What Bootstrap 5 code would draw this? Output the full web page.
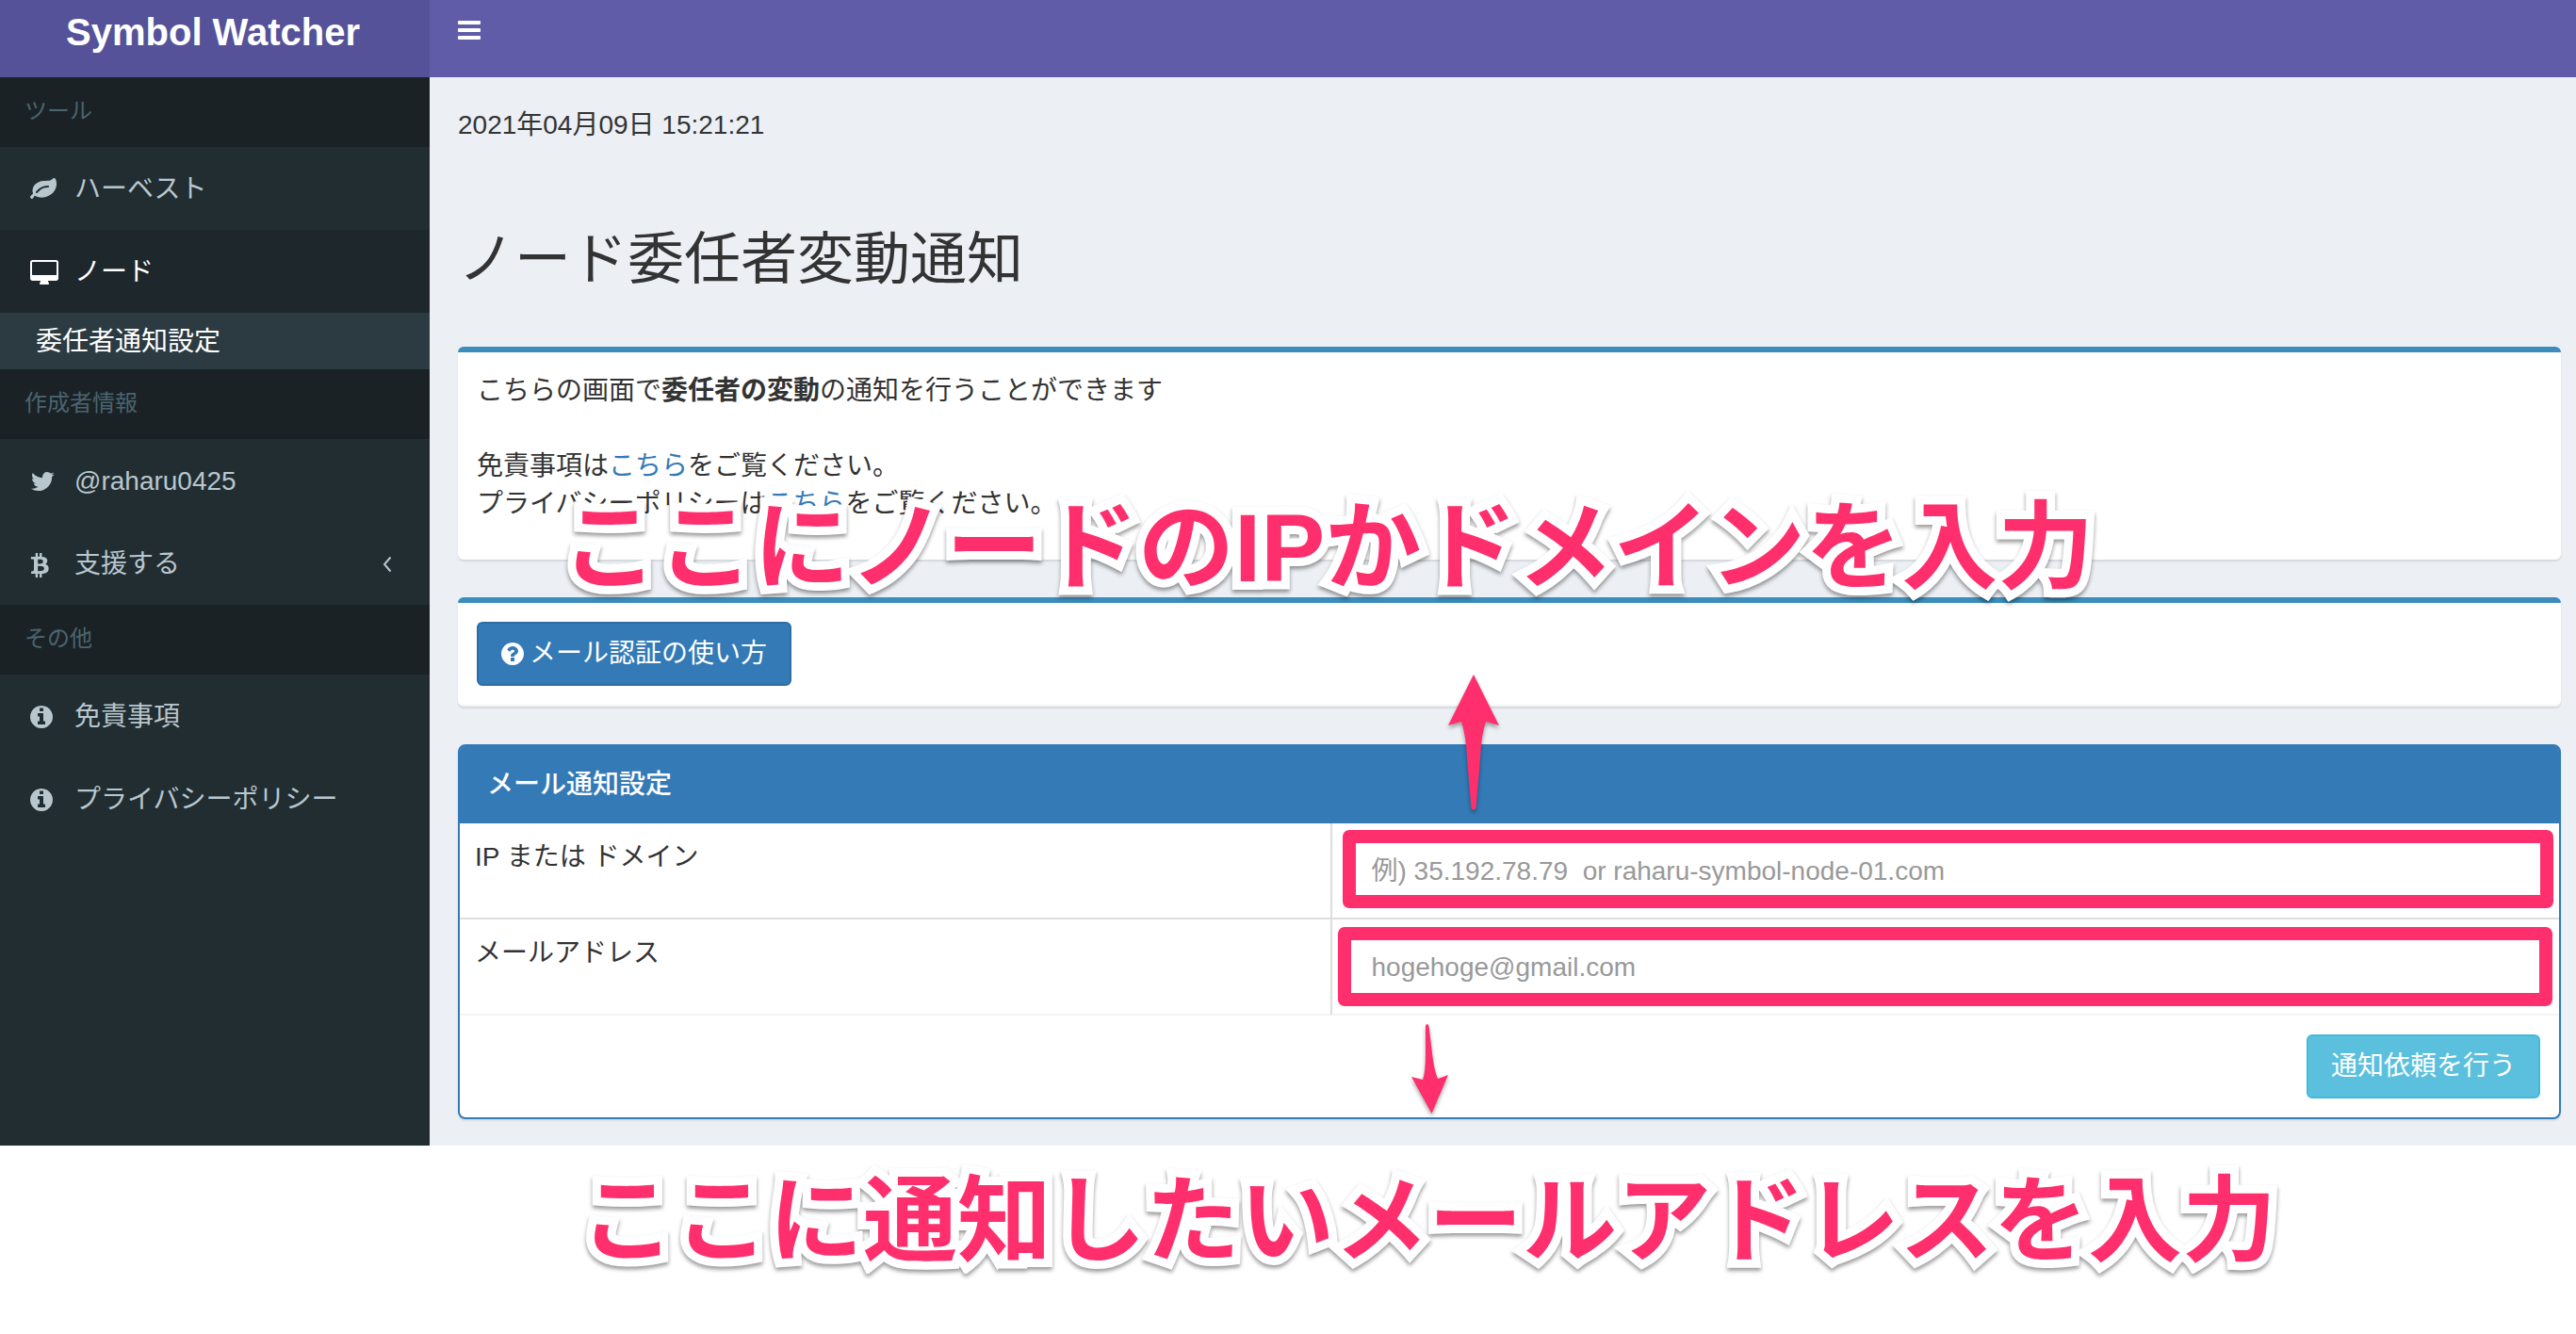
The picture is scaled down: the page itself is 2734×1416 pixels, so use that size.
<!DOCTYPE html>
<html lang="ja">
<head>
<meta charset="utf-8">
<meta name="viewport" content="width=device-width, initial-scale=1">
<title>Symbol Watcher</title>
<link rel="stylesheet" href="https://cdn.jsdelivr.net/npm/bootstrap@5.3.0/dist/css/bootstrap.min.css">
<style>
  body { font: 400 28px/40px "Liberation Sans", "Noto Sans CJK JP", sans-serif; color: #333; background: #fff; }
  a { text-decoration: none; }
  svg { fill: currentColor; display: block; }
  .side { width: 456px; flex: none; background: #222d32; }
  .brand { height: 82px; padding: 0 4px 14px 0; background: #555299; color: #fff; font-size: 40px; line-height: 68px; font-weight: 700; text-align: center; }
  .brand:hover { color: #fff; }
  .topbar { height: 82px; padding: 0 30px 18px; background: #605ca8; }
  .toggle { border: 0; background: none; padding: 0; color: #fff; }
  .side-head { height: 74px; padding: 16px 26px 18px; background: #1a2226; color: #4b646f; font-size: 24px; }
  .side-link { height: 88px; padding: 2px 40px 0 32px; color: #b8c7ce; }
  .side-link .ico { width: 47px; }
  .side-link.active { background: #1e282c; color: #fff; }
  .side-sub { height: 60px; padding: 2px 38px 0; background: #2c3b41; color: #fff; }
  .page-main { background: #ecf0f5; min-width: 0; }
  .content { padding: 31px 16px 28px 30px; }
  .content h1 { font-size: 60px; line-height: 66px; font-weight: 400; margin: 90px 0 59px; }
  .box { background: #fff; border-top: 6px solid #3c8dbc; border-radius: 6px; box-shadow: 0 2px 2px rgba(0,0,0,.1); padding: 20px; margin-bottom: 40px; }
  .box p { padding-top: 1px; margin-bottom: 19px; }
  .box-foot { border-bottom: 2px solid #f4f4f4; }
  .box a:not(.btn) { color: #337ab7; }
  .btn-lte { font-size: 28px; line-height: 40px; padding: 12px 24px; border-width: 2px; border-radius: 6px; color: #fff; height: 68px; }
  .btn-help { gap: 6px; background: #337ab7; border-color: #2e6da4; }
  .btn-send { background: #5bc0de; border-color: #46b8da; }
  .panel { border: 2px solid #337ab7; border-radius: 8px; background: #fff; box-shadow: 0 2px 2px rgba(0,0,0,.08); }
  .panel-title { background: #337ab7; color: #fff; padding: 21px 29px; font-size: 28px; line-height: 40px; margin: 0; border-radius: 5px 5px 0 0; }
  .settings { width: 100%; border-collapse: separate; border-spacing: 0; table-layout: fixed; }
  .settings th { width: 41.45%; font-weight: 400; vertical-align: top; }
  .settings th, .settings td { padding: 16px; border-bottom: 2px solid #ddd; }
  .settings td { border-left: 2px solid #ddd; }
  .settings tr:last-child > * { border-bottom-color: #f4f4f4; }
  .settings .form-control { height: 68px; padding: 13px 24px 11px; border: 2px solid #ccc; border-radius: 0; font-size: 28px; line-height: 40px; }
  .settings .form-control::placeholder { color: #999; }
  .field { position: relative; }
  .frame { position: absolute; border: 14px solid #ff2f6d; border-radius: 7px; pointer-events: none; }
  .frame-ip { inset: -9px -10px -6px -5px; }
  .frame-mail { inset: -8px -9px -8px -10px; }
  .panel-foot { padding: 20px; }
  .note { color: #ff2f6d; font-weight: 700; white-space: nowrap; line-height: 120px; -webkit-text-stroke: 18px #fff; paint-order: stroke fill; filter: drop-shadow(0 3px 2px rgba(0,0,0,.4)); margin: 0; }
  .note-ip { position: absolute; left: 596px; top: 522px; font-size: 102px; }
  .note-mail { padding: 20px 0 60px 616px; font-size: 100px; }
  .arrow { position: absolute; fill: #ff2f6d; filter: drop-shadow(0 3px 2px rgba(0,0,0,.35)); }
  .arrow-up { left: 1536px; top: 715px; }
  .arrow-down { left: 1497px; top: 1086px; }
</style>
<script src="https://cdn.jsdelivr.net/npm/bootstrap@5.3.0/dist/js/bootstrap.bundle.min.js"></script>
</head>
<body class="position-relative">
<div class="d-flex align-items-stretch">
  <aside class="side d-flex flex-column">
    <a href="#" class="brand d-block">Symbol Watcher</a>
    <nav>
      <div class="side-head">ツール</div>
      <a href="#" class="side-link d-flex align-items-center">
        <span class="ico"><svg width="28" height="28" viewBox="0 0 1792 1792"><path d="M1280 704q0-26-19-45t-45-19q-172 0-318 49.500t-259.500 134-235.500 219.500q-19 21-19 45 0 26 19 45t45 19q24 0 45-19 27-24 74-71t67-66q137-124 268.500-176t313.500-52q26 0 45-19t19-45zm512-198q0 95-20 193-46 224-184.500 383t-357.500 268q-214 108-438 108-148 0-286-47-15-5-88-42t-96-37q-16 0-39.500 32t-45 70-52.500 70-60 32q-43 0-63.500-17.500t-45.500-59.500q-2-4-6-11t-5.500-10-3-9.500-1.500-13.500q0-35 31-73.500t68-65.500 68-56 31-48q0-4-14-38t-16-44q-9-51-9-104 0-115 43.500-220t119-184.500 170.500-139 204-95.500q55-18 145-25.500t179.500-9 178.500-6 163.500-24 113.500-56.500l29.500-29.500 29.500-28 27-20 36.500-16 43.500-4.500q39 0 70.500 46t47.500 112 24 124 8 96z"/></svg></span>ハーベスト</a>
      <a href="#" class="side-link active d-flex align-items-center">
        <span class="ico"><svg width="30" height="26" viewBox="-64 0 1920 1664"><path d="M1728 992v-832q0-13-9.500-22.500t-22.500-9.500h-1600q-13 0-22.500 9.500t-9.500 22.500v832q0 13 9.500 22.500t22.500 9.500h1600q13 0 22.500-9.500t9.500-22.500zm128-832v1088q0 66-47 113t-113 47h-544q0 37 16 77.500t32 71 16 43.500q0 26-19 45t-45 19h-512q-26 0-45-19t-19-45q0-14 16-44t32-70 16-78h-544q-66 0-113-47t-47-113v-1088q0-66 47-113t113-47h1600q66 0 113 47t47 113z"/></svg></span>ノード</a>
      <a href="#" class="side-sub d-flex align-items-center">委任者通知設定</a>
      <div class="side-head">作成者情報</div>
      <a href="#" class="side-link d-flex align-items-center">
        <span class="ico"><svg width="26" height="28" viewBox="44 0 1664 1792"><path d="M1684 408q-67 98-162 167 1 14 1 42 0 130-38 259.500t-115.500 248.500-184.500 210.500-258 146-323 54.500q-271 0-496-145 35 4 78 4 225 0 401-138-105-2-188-64.500t-114-159.500q33 5 61 5 43 0 85-11-112-23-185.500-111.500t-73.500-205.500v-4q68 38 146 41-66-44-105-115t-39-154q0-88 44-163 121 149 294.500 238.500t371.500 99.500q-8-38-8-74 0-134 94.500-228.500t228.500-94.500q140 0 236 102 109-21 205-78-37 115-142 178 93-10 186-50z"/></svg></span>@raharu0425</a>
      <a href="#" class="side-link d-flex align-items-center">
        <span class="ico"><svg width="20" height="28" viewBox="0 0 1280 1792"><path d="M1167 640q18 182-131 258 117 28 175 103t45 214q-7 71-32.500 125t-64.500 89-97 58.500-121.500 34.500-145.500 15v255h-154v-251q-80 0-122-1v252h-154v-255q-18 0-54-.5t-55-.5h-200l31-183h111q50 0 58-51v-402h16q-6-1-16-1v-287q-13-68-89-68h-111v-164l212 1q64 0 97-1v-252h154v247q82-2 122-2v-245h154v252q79 7 140 22.500t113 45 82.500 78 36.500 114.500zm-215 545q0-36-15-64t-37-46-57.500-30.500-65.500-18.500-74-9-69-3-64.500 1-47.500 1v338q8 0 37 .5t48 .5 53-1.500 58.500-4 57-8.500 55.500-14 47.500-21 39.500-30 24.500-40 9.500-51zm-71-476q0-33-12.500-58.500t-30.500-42-48-28-55-16.500-61.500-8-58-2.500-54 1-39.500.5v307q5 0 34.500.5t46.500 0 50-2 55-5.500 51.500-11 48.500-18.500 37-27 27-38.500 9-51z"/></svg></span>支援する
        <svg class="ms-auto" width="10" height="18" viewBox="0 0 10 18"><path d="M8.500 1.500 2 9l6.500 7.500" fill="none" stroke="currentColor" stroke-width="2"/></svg></a>
      <div class="side-head">その他</div>
      <a href="#" class="side-link d-flex align-items-center">
        <span class="ico"><svg width="24" height="24" viewBox="128 128 1536 1536"><path id="info" d="M1152 1376v-160q0-14-9-23t-23-9h-96v-512q0-14-9-23t-23-9h-320q-14 0-23 9t-9 23v160q0 14 9 23t23 9h96v320h-96q-14 0-23 9t-9 23v160q0 14 9 23t23 9h448q14 0 23-9t9-23zm-128-896v-160q0-14-9-23t-23-9h-192q-14 0-23 9t-9 23v160q0 14 9 23t23 9h192q14 0 23-9t9-23zm640 416q0 209-103 385.500t-279.500 279.500-385.500 103-385.500-103-279.500-279.500-103-385.500 103-385.500 279.500-279.500 385.500-103 385.500 103 279.500 279.500 103 385.500z"/></svg></span>免責事項</a>
      <a href="#" class="side-link d-flex align-items-center">
        <span class="ico"><svg width="24" height="24" viewBox="128 128 1536 1536"><use href="#info"/></svg></span>プライバシーポリシー</a>
    </nav>
  </aside>
  <div class="page-main flex-grow-1">
    <header class="topbar d-flex align-items-center">
      <button class="toggle" type="button" aria-label="メニュー"><svg width="24" height="20" viewBox="0 0 24 20"><rect width="24" height="4" rx="1"/><rect y="8" width="24" height="4" rx="1"/><rect y="16" width="24" height="4" rx="1"/></svg></button>
    </header>
    <main class="content">
      <div>2021年04月09日 15:21:21</div>
      <h1>ノード委任者変動通知</h1>
      <section class="box">
        <p>こちらの画面で<b>委任者の変動</b>の通知を行うことができます<br><br>免責事項は<a href="#">こちら</a>をご覧ください。<br>プライバシーポリシーは<a href="#">こちら</a>をご覧ください。</p>
      </section>
      <section class="box box-foot">
        <button type="button" class="btn btn-lte btn-help d-inline-flex align-items-center"><svg width="24" height="24" viewBox="128 128 1536 1536"><path d="M1024 1376v-192q0-14-9-23t-23-9h-192q-14 0-23 9t-9 23v192q0 14 9 23t23 9h192q14 0 23-9t9-23zm256-672q0-88-55.500-163t-138.500-116-170-41q-243 0-371 213-15 24 8 42l132 100q7 6 19 6 16 0 25-12 53-68 86-92 34-24 86-24 48 0 85.500 26t37.500 59q0 38-20 61t-68 45q-63 28-115.500 86.500t-52.500 125.500v36q0 14 9 23t23 9h192q14 0 23-9t9-23q0-19 21.500-49.500t54.500-49.500q32-18 49-28.500t46-35 44.500-48 28-60.500 12.500-81zm384 192q0 209-103 385.500t-279.500 279.500-385.500 103-385.500-103-279.500-279.500-103-385.500 103-385.500 279.500-279.500 385.500-103 385.500 103 279.500 279.500 103 385.500z"/></svg><span>メール認証の使い方</span></button>
      </section>
      <form class="panel">
        <h2 class="panel-title">メール通知設定</h2>
        <table class="settings">
          <tr>
            <th scope="row"><label for="ip">IP または ドメイン</label></th>
            <td><div class="field"><input id="ip" class="form-control" type="text" placeholder="例) 35.192.78.79&nbsp; or raharu-symbol-node-01.com"><span class="frame frame-ip"></span></div></td>
          </tr>
          <tr>
            <th scope="row"><label for="mail">メールアドレス</label></th>
            <td><div class="field"><input id="mail" class="form-control" type="email" placeholder="hogehoge@gmail.com"><span class="frame frame-mail"></span></div></td>
          </tr>
        </table>
        <div class="panel-foot d-flex justify-content-end"><button type="submit" class="btn btn-lte btn-send">通知依頼を行う</button></div>
      </form>
    </main>
  </div>
</div>
<p class="note note-mail">ここに通知したいメールアドレスを入力</p>
<p class="note note-ip">ここにノードのIPかドメインを入力</p>
<svg class="arrow arrow-up" width="56" height="146" viewBox="0 0 56 146"><path d="M28 1 55 55 41 51Q36 66 35 90L30.500 143Q28 146 25.500 143L21 90Q20 66 15 51L1 55z"/></svg>
<svg class="arrow arrow-down" width="42" height="98" viewBox="0 0 42 98"><path d="M16 3Q17.500-1 19.500 3L23 32Q25 50 29 59L40 55 22.500 96 1 57 13 60Q16 52 16 32z"/></svg>
</body>
</html>
